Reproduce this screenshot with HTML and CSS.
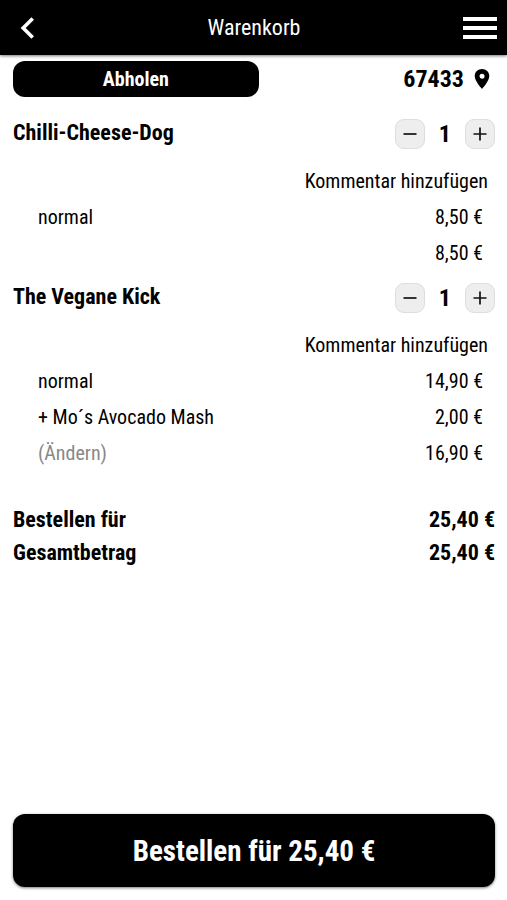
FILE: index.html
```html
<!DOCTYPE html>
<html lang="de">
<head>
<meta charset="utf-8">
<meta name="viewport" content="width=device-width, initial-scale=1">
<title>Warenkorb</title>
<link rel="stylesheet" href="styles.css">
</head>
<body>
<header class="bar">
  <button class="icon-button" type="button" aria-label="Zurück"><svg width="16" height="24" viewBox="0 0 16 24" fill="none" stroke="currentColor" stroke-width="3.600"><path d="M13.700 2.500 4.200 12l9.500 9.500"/></svg></button>
  <h1 class="title">Warenkorb</h1>
  <button class="icon-button" type="button" aria-label="Menü"><svg width="34" height="24" viewBox="0 0 34 24" fill="currentColor"><path d="M0 1h34v4H0zM0 10h34v4H0zM0 19h34v4H0z"/></svg></button>
</header>
<main class="cart">
  <div class="row delivery">
    <button class="pickup" type="button">Abholen</button>
    <a class="zip" href="#">67433 <svg width="16" height="20" viewBox="0 0 16 20" fill="currentColor"><path fill-rule="evenodd" d="M8 0C3.900 0 .7 3.100.7 7.100.7 12.300 8 20 8 20s7.300-7.700 7.300-12.900C15.300 3.100 12.100 0 8 0zm0 4.700a2.500 2.500 0 1 1 0 5 2.500 2.500 0 0 1 0-5z"/></svg></a>
  </div>
  <section class="item">
    <div class="row head"><h2 class="name">Chilli-Cheese-Dog</h2>
      <div class="stepper"><button class="step" type="button" aria-label="Weniger"><svg width="16" height="16" viewBox="0 0 16 16"><path d="M1.500 8h13"/></svg></button><span>1</span><button class="step" type="button" aria-label="Mehr"><svg width="16" height="16" viewBox="0 0 16 16"><path d="M1.500 8h13M8 1.500v13"/></svg></button></div>
    </div>
    <a class="comment" href="#">Kommentar hinzufügen</a>
    <div class="row line"><span>normal</span><span>8,50 €</span></div>
    <div class="row line"><span></span><span>8,50 €</span></div>
  </section>
  <section class="item">
    <div class="row head"><h2 class="name">The Vegane Kick</h2>
      <div class="stepper"><button class="step" type="button" aria-label="Weniger"><svg width="16" height="16" viewBox="0 0 16 16"><path d="M1.500 8h13"/></svg></button><span>1</span><button class="step" type="button" aria-label="Mehr"><svg width="16" height="16" viewBox="0 0 16 16"><path d="M1.500 8h13M8 1.500v13"/></svg></button></div>
    </div>
    <a class="comment" href="#">Kommentar hinzufügen</a>
    <div class="row line"><span>normal</span><span>14,90 €</span></div>
    <div class="row line"><span>+ Mo´s Avocado Mash</span><span>2,00 €</span></div>
    <div class="row line"><a class="change" href="#">(Ändern)</a><span>16,90 €</span></div>
  </section>
  <div class="totals">
    <div class="row total"><span>Bestellen für</span><span>25,40 €</span></div>
    <div class="row total"><span>Gesamtbetrag</span><span>25,40 €</span></div>
  </div>
</main>
<footer class="footer"><button class="order" type="button">Bestellen für 25,40 €</button></footer>
</body>
</html>
```

FILE: styles.css
```css
* { box-sizing: border-box; }
body { margin: 0; min-height: 100vh; display: flex; flex-direction: column; background: #fff; color: #000; font-family: "Roboto Condensed", Roboto, sans-serif; font-stretch: condensed; font-size: 20px; line-height: 24px; }
button { font: inherit; font-stretch: inherit; border: 0; padding: 0; cursor: pointer; }
a { color: inherit; text-decoration: none; }
h1, h2 { margin: 0; }
svg { display: block; }
.bar { display: grid; grid-template-columns: 40px 1fr 48px; align-items: center; height: 55px; padding: 0 10px 0 19px; background: #000; color: #fff; box-shadow: 0 1px 3px #0008; }
.icon-button { background: none; color: inherit; }
.icon-button:last-child { justify-self: end; }
.icon-button:first-child { justify-self: start; }
.title { font-size: 22px; font-weight: 400; text-align: center; }
.cart { flex: 1; padding: 6px 12px 0 13px; }
.row { display: flex; justify-content: space-between; align-items: center; }
.pickup { width: 51%; height: 36px; border-radius: 12px; background: #000; color: #fff; font-weight: 700; }
.zip { display: flex; align-items: center; gap: 10px; padding-right: 5px; font-size: 24px; font-weight: 700; }
.delivery { margin-bottom: 22px; }
.item + .item { margin-top: 12px; }
.head { height: 30px; }
.name { font-size: 22px; padding-bottom: 2px; }
.stepper { display: flex; align-items: center; gap: 14px; font-size: 24px; font-weight: 700; }
.step { display: grid; place-items: center; width: 30px; height: 30px; border: 1px solid #ddd; border-radius: 9px; background: #eee; }
.step path { stroke: #111; stroke-width: 1.7; }
.comment { display: block; margin: 20px 7px 6px 0; text-align: right; }
.line { height: 36px; padding: 0 12px 0 25px; }
.change { color: #888; }
.totals { margin-top: 32px; }
.total { height: 33px; font-size: 22px; font-weight: 700; }
.footer { padding: 0 12px 13px 13px; }
.order { display: block; width: 100%; height: 73px; border-radius: 12px; background: #000; color: #fff; font-size: 29px; font-weight: 700; box-shadow: 0 1px 3px #0008; }
```
